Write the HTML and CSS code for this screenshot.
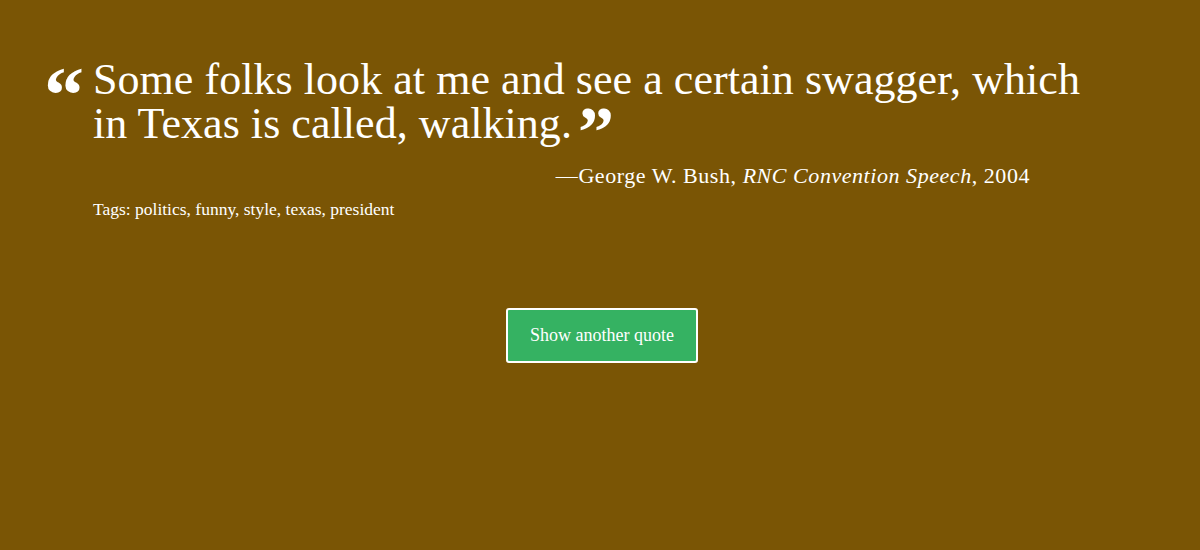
FILE: index.html
```html
<!DOCTYPE html>
<html>
<head>
<meta charset="utf-8">
<link rel="stylesheet" href="styles.css">
</head>
<body>
<main class="page">
  <section class="quote-box">
    <blockquote class="quote">
      <span class="qmark open">&ldquo;</span>
      <p class="quote-text">Some folks look at me and see a certain swagger, which in Texas is called, walking. <span class="qmark close">&rdquo;</span></p>
    </blockquote>
    <p class="attribution">&mdash;George W. Bush, <cite>RNC Convention Speech</cite>, 2004</p>
    <p class="tags">Tags: politics, funny, style, texas, president</p>
  </section>
  <div class="actions">
    <button class="btn">Show another quote</button>
  </div>
</main>
</body>
</html>
```
FILE: styles.css
```css
html, body {
  margin: 0;
  padding: 0;
  background: #7a5505;
  color: #ffffff;
  font-family: "Liberation Serif", "DejaVu Serif", serif;
}
.page {
  width: 1200px;
  height: 550px;
  box-sizing: border-box;
  padding-top: 58px;
}
.quote-box {
  width: 1060px;
  margin-left: 48px;
}
.quote {
  margin: 0;
  display: flex;
  align-items: flex-start;
}
.qmark {
  font-family: "Liberation Serif", serif;
  font-weight: bold;
}
.qmark.open {
  font-size: 80px;
  line-height: 80px;
  height: 44px;
  width: 45px;
  flex: none;
  position: relative;
  top: -3px;
  left: -4px;
}
.qmark.close {
  font-size: 72px;
  line-height: 0;
  margin-left: -5px;
  position: relative;
  top: 18px;
}
.quote-text {
  margin: 0;
  font-size: 44px;
  line-height: 44px;
  letter-spacing: 0.05px;
}
.attribution {
  margin: 17px 78px 0 0;
  text-align: right;
  font-size: 22px;
  line-height: 26px;
  letter-spacing: 0.55px;
}
.tags {
  margin: 10px 0 0 45px;
  font-size: 17.5px;
  line-height: 20px;
}
.actions {
  display: flex;
  justify-content: center;
  padding-left: 4px;
  margin-top: 89px;
}
.btn {
  width: 192px;
  height: 55px;
  background: #35b262;
  border: 2px solid #ffffff;
  border-radius: 3px;
  color: #ffffff;
  font-family: "Liberation Serif", serif;
  font-size: 18px;
}
```
